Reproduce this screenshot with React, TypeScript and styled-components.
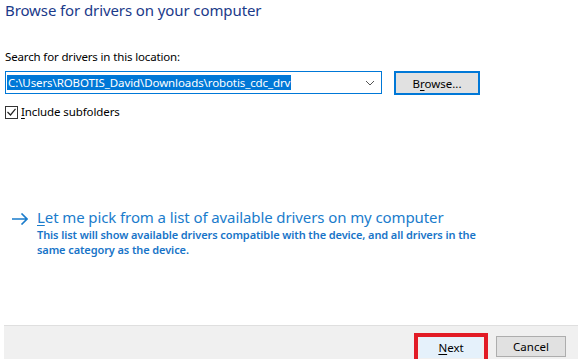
import React from "react";
import styled, { createGlobalStyle } from "styled-components";

const GlobalStyle = createGlobalStyle`
  html, body {
    margin: 0;
    padding: 0;
    background: #ffffff;
  }
  body {
    font-family: "Noto Sans", "Open Sans", sans-serif;
    color: #000000;
  }
`;

const Page = styled.div`
  width: 581px;
  height: 359px;
  display: flex;
  flex-direction: column;
  overflow: hidden;
`;

const Content = styled.div`
  flex: 1;
  display: flex;
  flex-direction: column;
  padding: 0 0 0 5px;
`;

const Title = styled.h1`
  margin: 0;
  font-size: 15px;
  font-weight: 400;
  line-height: 20px;
  color: #1b3a8a;
  letter-spacing: -0.1px;
`;

const Label = styled.div`
  margin-top: 29px;
  font-size: 11.5px;
  line-height: 16px;
  letter-spacing: -0.15px;
`;

const Row = styled.div`
  display: flex;
  align-items: center;
  margin-top: 5px;
  gap: 12px;
`;

const Combo = styled.div`
  width: 368px;
  height: 21px;
  border: 1px solid #0078d7;
  display: flex;
  align-items: center;
  padding: 0 6px 0 1px;
  box-sizing: content-box;
`;

const Selected = styled.span`
  background: #0078d7;
  color: #ffffff;
  font-size: 11.5px;
  line-height: 15px;
  padding: 0 1px;
  letter-spacing: -0.1px;
`;

const Chevron = styled.svg`
  margin-left: auto;
`;

const Button = styled.button<{ $focused?: boolean }>`
  font-family: inherit;
  font-size: 11.5px;
  height: 24px;
  width: 86px;
  background: #e1e1e1;
  border: ${(p) => (p.$focused ? "2px solid #0078d7" : "1px solid #adadad")};
  padding: 0;
  color: #000;
  margin-top: 1px;
`;

const Check = styled.label`
  display: flex;
  align-items: center;
  gap: 3px;
  margin-top: 9px;
  font-size: 11.5px;
  line-height: 16px;
  letter-spacing: -0.1px;
`;

const Box = styled.span`
  width: 11px;
  height: 11px;
  border: 1px solid #333333;
  display: flex;
  align-items: center;
  justify-content: center;
`;

const Key = styled.span`
  text-decoration: underline;
  text-underline-offset: 2px;
`;

const Option = styled.div`
  display: flex;
  gap: 9px;
  margin-top: 87px;
  padding-left: 7px;
`;

const Arrow = styled.svg`
  margin-top: 6px;
  flex: none;
`;

const OptionText = styled.div`
  display: flex;
  flex-direction: column;
  color: #1a7ccc;
`;

const LinkTitle = styled.div`
  font-size: 15px;
  line-height: 20px;
  letter-spacing: -0.1px;
`;

const Desc = styled.div`
  font-size: 11px;
  font-weight: 600;
  line-height: 15px;
  color: #1874c8;
  width: 450px;
  letter-spacing: -0.1px;
`;

const Footer = styled.div`
  height: 33px;
  margin: 0 3px 0 4px;
  background: #f0f0f0;
  border-top: 1px solid #dfdfdf;
  display: flex;
  justify-content: flex-end;
  align-items: flex-start;
  gap: 8px;
  padding-right: 12px;
`;

const NextWrap = styled.div`
  margin-top: 7px;
  border: 4px solid #e21b25;
  border-bottom: none;
  height: 26px;
  display: flex;
  padding: 0 2px;
`;

const FootButton = styled.button<{ $primary?: boolean }>`
  font-family: inherit;
  font-size: 11.5px;
  width: ${(p) => (p.$primary ? "62px" : "70px")};
  height: 21px;
  margin-top: ${(p) => (p.$primary ? "0" : "10px")};
  background: ${(p) => (p.$primary ? "#e5f1fb" : "#e1e1e1")};
  border: ${(p) => (p.$primary ? "none" : "1px solid #adadad")};
  padding: 0;
  color: #000;
`;

export default function App() {
  return (
    <Page>
      <GlobalStyle />
      <Content>
        <Title>Browse for drivers on your computer</Title>
        <Label>Search for drivers in this location:</Label>
        <Row>
          <Combo>
            <Selected>C:\Users\ROBOTIS_David\Downloads\robotis_cdc_drv</Selected>
            <Chevron width="10" height="6" viewBox="0 0 10 6">
              <path d="M1 1 L5 5 L9 1" fill="none" stroke="#555" strokeWidth="1" />
            </Chevron>
          </Combo>
          <Button $focused>
            B<Key>r</Key>owse...
          </Button>
        </Row>
        <Check>
          <Box>
            <svg width="9" height="8" viewBox="0 0 9 8">
              <path d="M0.5 4 L3.5 7 L8.5 0.8" fill="none" stroke="#222" strokeWidth="1.2" />
            </svg>
          </Box>
          <span>
            <Key>I</Key>nclude subfolders
          </span>
        </Check>
        <Option>
          <Arrow width="16" height="12" viewBox="0 0 16 12">
            <path d="M0 6 H15 M9.5 0.5 L15 6 L9.5 11.5" fill="none" stroke="#1a7ccc" strokeWidth="1.6" />
          </Arrow>
          <OptionText>
            <LinkTitle>
              <Key>L</Key>et me pick from a list of available drivers on my computer
            </LinkTitle>
            <Desc>
              This list will show available drivers compatible with the device, and all drivers in the same
              category as the device.
            </Desc>
          </OptionText>
        </Option>
      </Content>
      <Footer>
        <NextWrap>
          <FootButton $primary>
            <Key>N</Key>ext
          </FootButton>
        </NextWrap>
        <FootButton>Cancel</FootButton>
      </Footer>
    </Page>
  );
}
